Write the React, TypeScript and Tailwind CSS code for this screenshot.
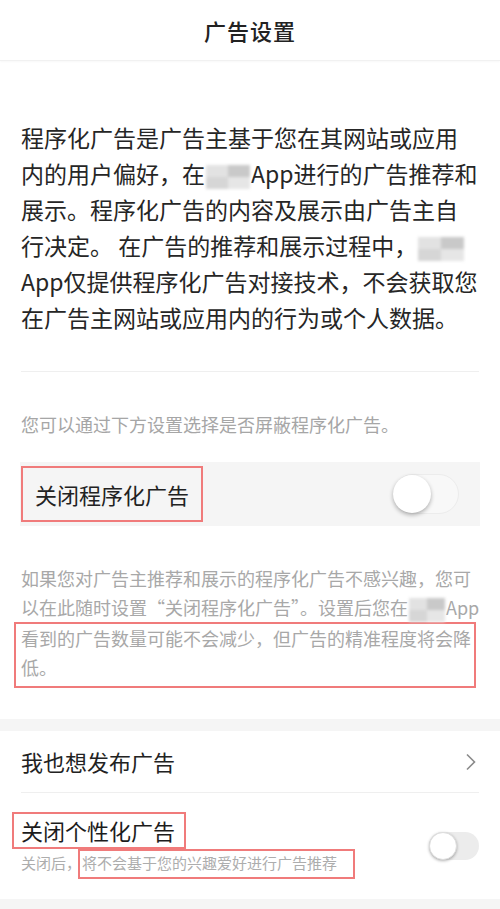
import React from 'react';

function Blur({ w }: { w: number }) {
  // mosaic blur masking the app name
  return (
    <span className="relative inline-block h-[24px] align-middle mx-[1px] leading-none" style={{ width: w }}>
      <span className="absolute inset-0 grid grid-cols-2 grid-rows-2 blur-[1.5px]">
        <span className="bg-[#e2e2e2]" />
        <span className="bg-[#c9c9c9]" />
        <span className="bg-[#d6d6d6]" />
        <span className="bg-[#e6e6e6]" />
      </span>
    </span>
  );
}

function Toggle({ big }: { big?: boolean }) {
  if (big) {
    return (
      <div className="relative w-[66px] h-[40px] rounded-full border border-[#ececec] bg-[#f8f8f8]">
        <div className="absolute left-[-1px] top-[0px] w-[38px] h-[38px] rounded-full bg-white shadow-[0_2px_4px_rgba(0,0,0,0.3)]" />
      </div>
    );
  }
  return (
    <div className="relative w-[50px] h-[28px] rounded-full bg-[#ececec]">
      <div className="absolute left-0 top-0 w-[28px] h-[28px] rounded-full bg-white border border-[#ddd] shadow-[0_1px_3px_rgba(0,0,0,0.3)]" />
    </div>
  );
}

export default function App() {
  return (
    <div className="w-[500px] h-[909px] bg-white overflow-hidden font-['Noto_Sans_CJK_SC','Noto_Sans',sans-serif] text-[#222]">
      <header className="h-[61px] flex items-center justify-center border-b border-[#f1f1f1] shadow-[0_1px_2px_rgba(0,0,0,0.03)]">
        <h1 className="text-[22px] font-medium text-[#222] tracking-[1px]">广告设置</h1>
      </header>

      <section className="px-[21px]">
        <p className="pt-[58px] text-[23px] leading-[36px] whitespace-nowrap text-[#262626]">
          程序化广告是广告主基于您在其网站或应用
          <br />
          内的用户偏好，在<Blur w={44} />App进行的广告推荐和
          <br />
          展示。程序化广告的内容及展示由广告主自
          <br />
          行决定。 在广告的推荐和展示过程中，<Blur w={46} />
          <br />
          App仅提供程序化广告对接技术，不会获取您
          <br />
          在广告主网站或应用内的行为或个人数据。
        </p>

        <div className="mt-[36px] h-px bg-[#efefef]" />

        <p className="mt-[38px] text-[18px] leading-[28px] text-[#a6a6a6]">
          您可以通过下方设置选择是否屏蔽程序化广告。
        </p>

        <div className="mt-[24px] h-[64px] -mx-[1px] bg-[#f5f5f5] flex items-center justify-between pr-[21px]">
          <div className="ml-[1px] h-[56px] w-[182px] border-2 border-[#f07b7b] flex items-center pl-[12px]">
            <span className="text-[22px] text-[#222]">关闭程序化广告</span>
          </div>
          <Toggle big />
        </div>

        <div className="mt-[38px] text-[18px] leading-[29px] text-[#a8a8a8] whitespace-nowrap">
          <p>如果您对广告主推荐和展示的程序化广告不感兴趣，您可</p>
          <p>
            以在此随时设置“关闭程序化广告”。设置后您在<Blur w={36} />App
          </p>
          <div className="-ml-[7px] mr-[3px] border-2 border-[#f07b7b] pl-[5px] pb-[4px]">
            <p>看到的广告数量可能不会减少，但广告的精准程度将会降</p>
            <p>低。</p>
          </div>
        </div>
      </section>

      <div className="mt-[31px] h-[12px] bg-[#f5f5f5]" />

      <div className="px-[21px]">
        <div className="h-[62px] flex items-center justify-between border-b border-[#efefef]">
          <span className="text-[22px] text-[#222]">我也想发布广告</span>
          <svg width="12" height="18" viewBox="0 0 12 18" className="mr-[2px]">
            <path d="M2 1.5 L9.5 9 L2 16.5" fill="none" stroke="#8a8a8a" strokeWidth="1.6" />
          </svg>
        </div>

        <div className="h-[106px] flex items-center justify-between">
          <div className="flex flex-col mt-[-2px]">
            <div className="-ml-[9px] w-[174px] h-[37px] border-2 border-[#f07b7b] flex items-center pl-[7px]">
              <span className="text-[22px] leading-[30px] text-[#1c1c1c]">关闭个性化广告</span>
            </div>
            <div className="flex items-center text-[15px] text-[#adadad]">
              <span>关闭后，</span>
              <span className="-ml-[3px] h-[30px] w-[277px] border-2 border-[#f07b7b] flex items-center pl-[2px]">
                将不会基于您的兴趣爱好进行广告推荐
              </span>
            </div>
          </div>
          <Toggle />
        </div>
      </div>

      <div className="h-[20px] bg-[#f5f5f5]" />
    </div>
  );
}
